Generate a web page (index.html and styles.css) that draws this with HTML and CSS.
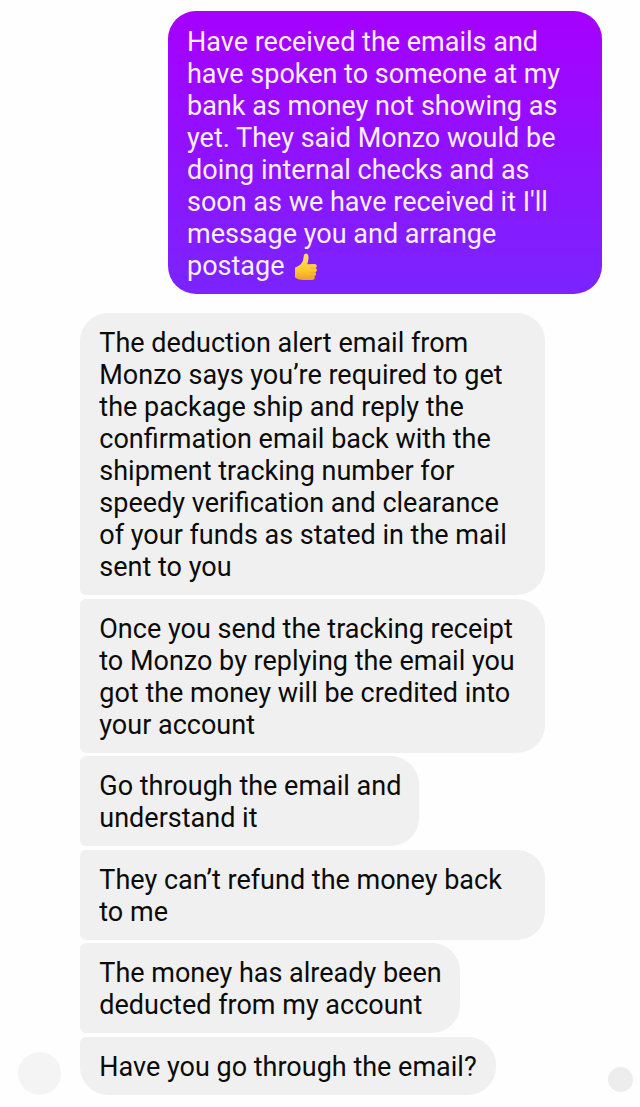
FILE: index.html
```html
<!DOCTYPE html>
<html lang="en">
<head>
<meta charset="utf-8">
<title>Chat</title>
<link rel="stylesheet" href="styles.css">
</head>
<body>
<main class="chat">
  <div class="bubble sent">Have received the emails and<br>have spoken to someone at my<br>bank as money not showing as<br>yet. They said Monzo would be<br>doing internal checks and as<br>soon as we have received it I'll<br>message you and arrange<br>postage <svg class="thumb" viewBox="0 0 24 28" role="img" aria-label="thumbs up"><defs><linearGradient id="skin" x1="0" y1="0" x2="0" y2="1"><stop offset="0" stop-color="#ffdc70"/><stop offset=".6" stop-color="#ffcb35"/><stop offset="1" stop-color="#eea022"/></linearGradient></defs><path fill="url(#skin)" d="M1 14.500Q4.500 13.500 7 11Q9.500 8 9.700 3.500Q9.800 .5 12 .5Q14.800 .8 14.500 5Q14.300 8.500 13.300 11.300L20.500 11Q23 11.200 22.800 13.200Q22.700 14.500 21.600 15Q23.300 16 22.700 17.800Q22.200 19 21.300 19.300Q22.500 20.600 21.800 22Q21.200 23 20.400 23.200Q21.300 24.700 20.300 26Q19.600 27 18 27H9Q4.500 27 1 24.500Z"/><path fill="none" stroke="#e9a52d" stroke-width=".6" stroke-linecap="round" d="M16.500 15.200H21.400M16.300 19.400H21M16 23.300H20.200"/></svg></div>
  <div class="thread">
    <div class="avatar"></div>
    <div class="received">
      <div class="bubble">The deduction alert email from<br>Monzo says you’re required to get<br>the package ship and reply the<br>confirmation email back with the<br>shipment tracking number for<br>speedy verification and clearance<br>of your funds as stated in the mail<br>sent to you</div>
      <div class="bubble">Once you send the tracking receipt<br>to Monzo by replying the email you<br>got the money will be credited into<br>your account</div>
      <div class="bubble medium">Go through the email and<br>understand it</div>
      <div class="bubble">They can’t refund the money back<br>to me</div>
      <div class="bubble account">The money has already been<br>deducted from my account</div>
      <div class="bubble last">Have you go through the email?</div>
    </div>
    <div class="receipt"></div>
  </div>
</main>
</body>
</html>
```
FILE: styles.css
```css
body {
  margin: 0;
  background: #fefefe;
  color: #0b0b0b;
  font: 27px/32px Roboto, sans-serif;
}
.chat {
  box-sizing: border-box;
  height: 1107px;
  padding-top: 11px;
  display: flex;
  flex-direction: column;
  gap: 19.5px;
}
.bubble {
  box-sizing: border-box;
  width: 464.5px;
  padding: 14px 19px 12px;
  border-radius: 6px 28px 28px 6px;
  background: #f0f0f0;
  white-space: nowrap;
}
.sent {
  width: 433.5px;
  height: 282.5px;
  margin-left: 168px;
  padding-top: 15px;
  border-radius: 28px;
  background: linear-gradient(#a600ff, #7a24ff);
  color: #f8eeff;
}
.thumb {
  width: 24px;
  height: 28px;
  margin-left: 3px;
  vertical-align: -6px;
}
.thread {
  display: flex;
  align-items: flex-end;
}
.avatar {
  width: 43px;
  height: 43px;
  margin: 0 19px 0 18.3px;
  border-radius: 50%;
  background: #f4f4f4;
}
.received {
  display: flex;
  flex-direction: column;
  gap: 3.6px;
  width: 464.5px;
}
.received .bubble:first-child {
  border-top-left-radius: 28px;
}
.medium {
  width: 339px;
}
.account {
  width: 380px;
}
.last {
  width: 416px;
  border-bottom-left-radius: 28px;
}
.receipt {
  width: 25px;
  height: 25px;
  margin: 0 0 3px 62.8px;
  border-radius: 50%;
  background: #ededed;
}
```
